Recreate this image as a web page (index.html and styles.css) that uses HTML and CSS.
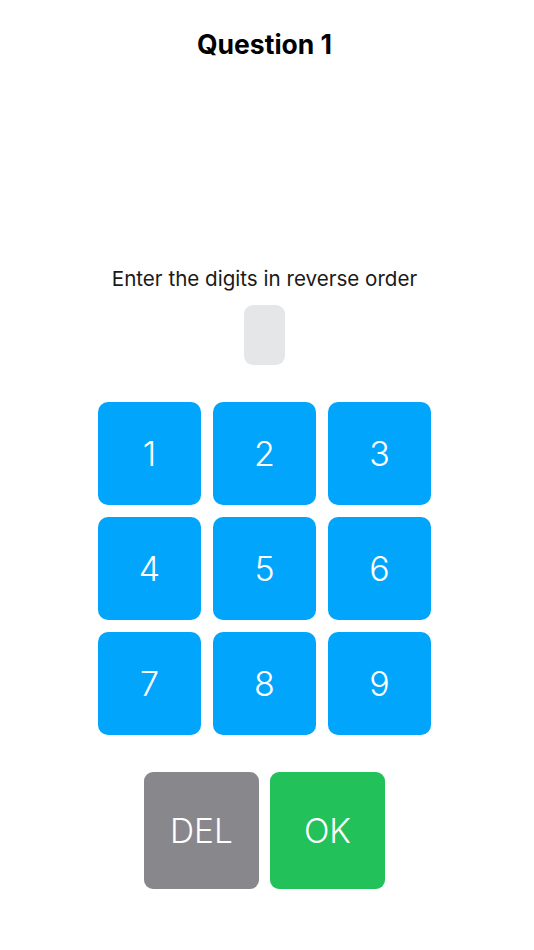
FILE: index.html
```
<!DOCTYPE html>
<html lang="en">
<head>
<meta charset="utf-8">
<title>Question 1</title>
<link rel="stylesheet" href="styles.css">
</head>
<body>
<main class="screen">
  <h1 class="title">Question 1</h1>
  <p class="prompt">Enter the digits in reverse order</p>
  <div class="entry"></div>
  <div class="keypad">
    <button class="key">1</button>
    <button class="key">2</button>
    <button class="key">3</button>
    <button class="key">4</button>
    <button class="key">5</button>
    <button class="key">6</button>
    <button class="key">7</button>
    <button class="key">8</button>
    <button class="key">9</button>
  </div>
  <div class="actions">
    <button class="action del">DEL</button>
    <button class="action ok">OK</button>
  </div>
</main>
</body>
</html>
```
FILE: styles.css
```
html, body {
  margin: 0;
  padding: 0;
  background: #ffffff;
}
body {
  font-family: Inter, "Noto Sans", "Liberation Sans", sans-serif;
  color: #111111;
}
.screen {
  width: 529px;
  display: flex;
  flex-direction: column;
  align-items: center;
}
.title {
  margin: 28px 0 0;
  font-size: 26.5px;
  line-height: 32px;
  font-weight: 700;
  color: #000000;
}
.prompt {
  margin: 207px 0 0;
  font-size: 20.6px;
  line-height: 24px;
  font-weight: 400;
  color: #1a1a1a;
}
.entry {
  margin-top: 14px;
  width: 41px;
  height: 60px;
  border-radius: 9px;
  background: #e5e6e8;
}
.keypad {
  margin-top: 37px;
  display: grid;
  grid-template-columns: repeat(3, 103px);
  grid-auto-rows: 103px;
  gap: 12px;
}
.key {
  border: none;
  border-radius: 10px;
  background: #02a5fc;
  color: #ffffff;
  font-family: inherit;
  font-size: 34px;
  font-weight: 300;
  padding: 0;
}
.actions {
  margin-top: 37px;
  display: flex;
  gap: 11px;
}
.action {
  width: 115px;
  height: 117px;
  border: none;
  border-radius: 9px;
  color: #ffffff;
  font-family: inherit;
  font-size: 33.5px;
  font-weight: 300;
  padding: 0;
}
.del {
  background: #88878c;
}
.ok {
  background: #23c15a;
}
```
